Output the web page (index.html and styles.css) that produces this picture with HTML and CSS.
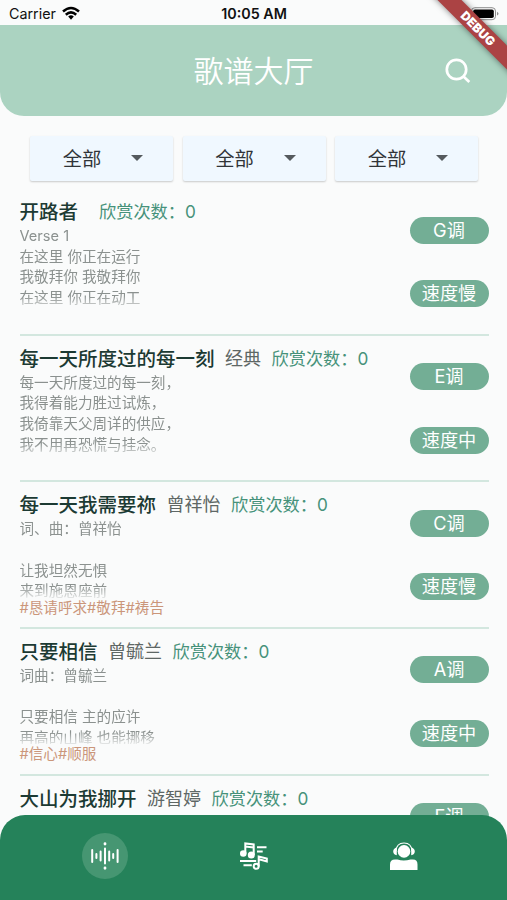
FILE: index.html
```
<!DOCTYPE html>
<html lang="zh-CN">
  <head>
    <title>歌谱大厅</title>
    <meta charset="utf-8">
    <link rel="stylesheet" href="styles.css">
  </head>

  <body>
    <div class="status">
      <div class="carrier">
        Carrier
        <svg width="18" height="15" viewBox="0 0 18 14" fill="none" stroke="#000" stroke-width="2.5">
          <path d="M1 5Q9 -2 17 5"/>
          <path d="M3.8 8.2Q9 3.6 14.2 8.2"/>
          <path d="M6.2 10L9 13.2L11.8 10Q9 7.6 6.2 10Z" fill="#000" stroke="none"/>
        </svg>
      </div>
      <div class="time">10:05 AM</div>
      <svg class="battery" width="28" height="14" viewBox="0 0 28 14">
        <rect x="0.5" y="0.7" width="24" height="12" rx="3.4" fill="none" stroke="#8d8d8d"/>
        <rect x="2.2" y="2.4" width="20.6" height="8.6" rx="1.8"/>
        <path d="M26 4.8Q29 6.7 26 8.6Z" fill="#8d8d8d"/>
      </svg>
    </div>

    <div class="header">
      <h1>歌谱大厅</h1>
      <svg class="search" width="28" height="28" viewBox="0 0 28 28" fill="none" stroke="#fff" stroke-width="2.7">
        <circle cx="12.5" cy="12.5" r="9.7"/>
        <path d="M19 19L25.3 25"/>
      </svg>
    </div>

    <div class="filters">
      <div class="select">全部<i></i></div>
      <div class="select">全部<i></i></div>
      <div class="select">全部<i></i></div>
    </div>

    <div class="list">
      <div class="song">
        <div class="info">
          <div class="line"><b>开路者</b><span class="author"></span><span class="count">欣赏次数：0</span></div>
          <div class="lyric">Verse 1
在这里 你正在运行
我敬拜你 我敬拜你
在这里 你正在动工</div>
        </div>
        <div class="tags"><span>G调</span><span>速度慢</span></div>
      </div>

      <div class="song">
        <div class="info">
          <div class="line"><b>每一天所度过的每一刻</b><span class="author">经典</span><span class="count">欣赏次数：0</span></div>
          <div class="lyric">每一天所度过的每一刻，
我得着能力胜过试炼，
我倚靠天父周详的供应，
我不用再恐慌与挂念。</div>
        </div>
        <div class="tags"><span>E调</span><span>速度中</span></div>
      </div>

      <div class="song">
        <div class="info">
          <div class="line"><b>每一天我需要祢</b><span class="author">曾祥怡</span><span class="count">欣赏次数：0</span></div>
          <div class="lyric short">词、曲：曾祥怡

让我坦然无惧
来到施恩座前</div>
          <div class="topic">#恳请呼求#敬拜#祷告</div>
        </div>
        <div class="tags"><span>C调</span><span>速度慢</span></div>
      </div>

      <div class="song">
        <div class="info">
          <div class="line"><b>只要相信</b><span class="author">曾毓兰</span><span class="count">欣赏次数：0</span></div>
          <div class="lyric short">词曲：曾毓兰

只要相信 主的应许
再高的山峰 也能挪移</div>
          <div class="topic">#信心#顺服</div>
        </div>
        <div class="tags"><span>A调</span><span>速度中</span></div>
      </div>

      <div class="song">
        <div class="info">
          <div class="line"><b>大山为我挪开</b><span class="author">游智婷</span><span class="count">欣赏次数：0</span></div>
        </div>
        <div class="tags"><span>F调</span></div>
      </div>
    </div>

    <div class="nav">
      <div class="tab">
        <div class="active">
          <svg width="30" height="30" viewBox="0 0 30 30" stroke="#fff" stroke-width="2" stroke-linecap="round">
            <path d="M2.2 9V21M6.4 13V17M10.6 10.5V19.5M15 7.5V22.5M19.2 10.5V19.5M23.2 13V17M27.6 9V21"/>
            <path d="M15 2.7V3M15 27V27.3" stroke-width="2.8"/>
          </svg>
        </div>
      </div>
      <div class="tab">
        <svg width="30" height="30" viewBox="0 0 30 30" fill="none" stroke="#fff" stroke-width="2">
          <path d="M6.3 12.5V2.5L14.7 3.5V14M6.3 5.6L14.7 6.6"/>
          <circle cx="4.3" cy="12.5" r="3.3" fill="#fff" stroke="none"/>
          <circle cx="12.3" cy="14" r="3.5" fill="#fff" stroke="none"/>
          <path d="M18 6.2H27.5M18 10.5H23.7M1 20H17.2M4.5 24.2H12.8"/>
          <circle cx="17.2" cy="25.2" r="2.5"/>
          <path d="M19.7 25.5V15.5L27.8 17.5V20.5L20 18.3"/>
        </svg>
      </div>
      <div class="tab">
        <svg width="30" height="30" viewBox="0 0 30 30" fill="#fff">
          <circle cx="15" cy="10.4" r="6.3"/>
          <path d="M7 10Q7.5 2 15 2T23 10" fill="none" stroke="#fff" stroke-width="1.2"/>
          <path d="M7.8 6.3Q4.2 7.5 4.2 10.5T7.8 14.3ZM22.2 6.3Q25.8 7.5 25.8 10.5T22.2 14.3Z"/>
          <path d="M1 29V23.5Q1 18.5 6 18.5H8.5Q14.5 20.5 21.5 18.5H24Q28.5 18.5 28.5 23.5V29Z"/>
        </svg>
      </div>
    </div>

    <div class="corner"><div class="debug">DEBUG</div></div>
  </body>
</html>
```
FILE: styles.css
```
body {
  margin: 0;
  height: 900px;
  display: flex;
  flex-direction: column;
  position: relative;
  overflow: hidden;
  background: #fafbfb;
  font-family: Inter, "Noto Sans CJK SC", sans-serif;
}

/* 状态栏 */
.status {
  height: 25px;
  flex: none;
  display: grid;
  grid-template-columns: 1fr auto 1fr;
  align-items: center;
  padding: 2px 8px 0 9px;
  box-sizing: border-box;
  font-size: 14.3px;
  color: #111;
}
.carrier {
  display: flex;
  align-items: center;
  gap: 6px;
}
.time {
  font-weight: 600;
}
.battery {
  justify-self: end;
}

.header {
  height: 90.5px;
  flex: none;
  display: grid;
  grid-template-columns: 1fr auto 1fr;
  align-items: center;
  padding: 2px 35px 0;
  box-sizing: border-box;
  background: #abd3c1;
  border-radius: 0 0 24px 24px;
  color: #fff;
}
.header h1 {
  grid-column: 2;
  margin: 0;
  font-size: 30px;
  font-weight: 350;
  line-height: 40px;
}
.search {
  justify-self: end;
}

.filters {
  flex: none;
  display: flex;
  gap: 9.5px;
  padding: 20px 29px 0 30px;
}
.select {
  flex: 1;
  height: 45px;
  display: flex;
  align-items: center;
  justify-content: center;
  gap: 30px;
  padding-left: 3px;
  background: #f0f8ff;
  border-radius: 2px;
  box-shadow: 0 1px 2px rgba(0, 0, 0, 0.2);
  font-size: 19.3px;
  color: #303438;
}
.select i {
  border: 6px solid transparent;
  border-top-color: #555a5e;
  border-bottom: 0;
}

/* 歌曲列表 */
.list {
  flex: 1;
  min-height: 0;
  overflow: hidden;
  padding: 8.5px 18.5px 0 19.5px;
}
.song {
  height: 146.65px;
  box-sizing: border-box;
  border-bottom: 2.5px solid #d3e7df;
  display: flex;
  justify-content: space-between;
}
.line {
  height: 28px;
  margin-top: 9px;
  display: flex;
  align-items: center;
  gap: 10.5px;
  line-height: 28px;
  white-space: nowrap;
}
.line b {
  font-size: 19.5px;
  font-weight: 500;
  color: #1c3a33;
}
.author {
  font-size: 18px;
  color: #5e6765;
}
.count {
  font-size: 17.2px;
  color: #46927a;
}
.lyric {
  height: 83px;
  overflow: hidden;
  white-space: pre;
  font-size: 14.6px;
  line-height: 20.7px;
  color: #8b918f;
  -webkit-mask-image: linear-gradient(#000 85%, rgba(0, 0, 0, 0.2));
  mask-image: linear-gradient(#000 85%, rgba(0, 0, 0, 0.2));
}
.short {
  height: 78.5px;
}
.topic {
  font-size: 14.6px;
  line-height: 20px;
  color: #cb967a;
}
.tags {
  display: flex;
  flex-direction: column;
  gap: 36.5px;
  padding-top: 27.5px;
}
.tags span {
  width: 79px;
  height: 27px;
  border-radius: 14px;
  background: #73ae95;
  color: #fff;
  font-size: 18.2px;
  line-height: 27px;
  text-align: center;
}

/* 底部导航 */
.nav {
  height: 85.5px;
  flex: none;
  display: grid;
  grid-template-columns: repeat(3, 149.5px);
  justify-content: center;
  padding-left: 1px;
  background: #25825a;
  border-radius: 25px 25px 0 0;
  margin-top: -25px;
  z-index: 1;
}
.tab {
  display: flex;
  justify-content: center;
  align-items: center;
  padding-bottom: 3px;
}
.active {
  width: 46px;
  height: 46px;
  border-radius: 50%;
  background: #469672;
  display: flex;
  align-items: center;
  justify-content: center;
}

/* 右上角的DEBUG标记 */
.corner {
  position: absolute;
  top: 0;
  right: 0;
  width: 90px;
  height: 90px;
  overflow: hidden;
  z-index: 2;
}
.debug {
  position: absolute;
  left: 1px;
  top: 20px;
  width: 120px;
  height: 17px;
  transform: rotate(45deg);
  background: #ab4344;
  box-shadow: 0 0 6px rgba(0, 0, 0, 0.5);
  color: #fff;
  font: 900 12.3px/17px Inter, sans-serif;
  text-align: center;
}
```
